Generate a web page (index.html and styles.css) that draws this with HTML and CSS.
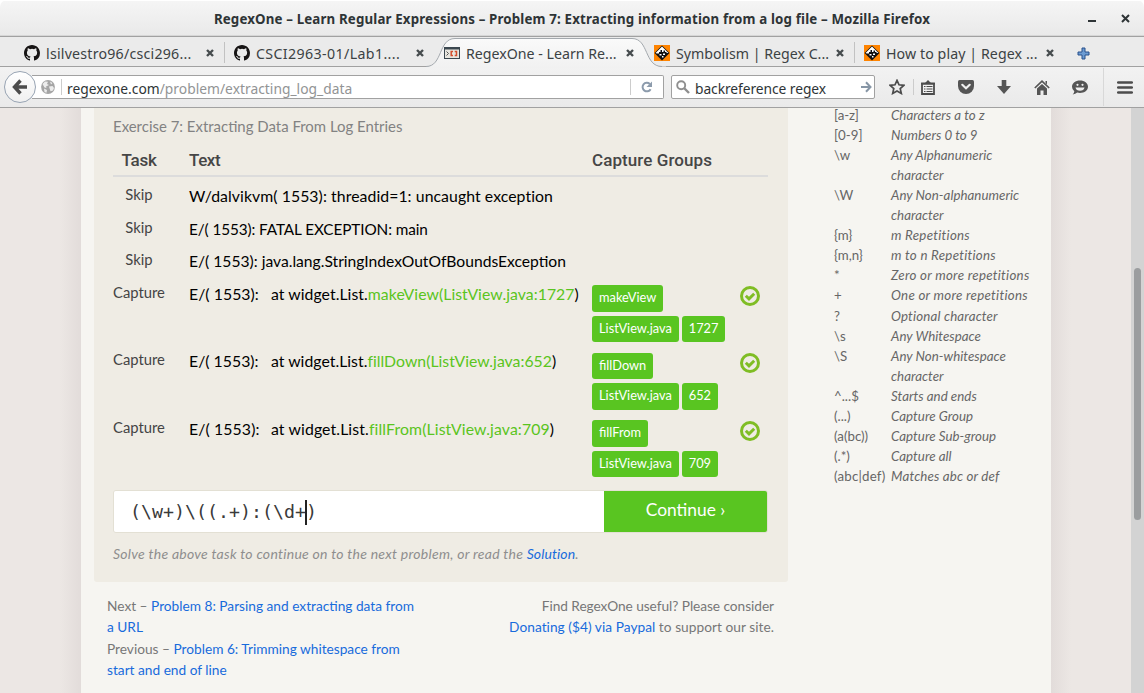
FILE: index.html
```
<!DOCTYPE html>
<html lang="en">
<head>
<meta charset="utf-8">
<title>RegexOne – Learn Regular Expressions – Problem 7</title>
<link rel="stylesheet" href="styles.css">
</head>
<body>
<svg class="defs" width="0" height="0">
  <symbol id="github" viewBox="0 0 16 16"><path fill="#171515" d="M8 0C3.58 0 0 3.58 0 8c0 3.54 2.29 6.53 5.47 7.59.4.07.55-.17.55-.38v-1.49c-2.01.37-2.53-.49-2.69-.94-.09-.23-.48-.94-.82-1.13-.28-.15-.68-.52-.01-.53.63-.01 1.08.58 1.23.82.72 1.21 1.87.87 2.33.66.07-.52.28-.87.51-1.07-1.78-.2-3.64-.89-3.64-3.95 0-.87.31-1.59.82-2.15-.08-.2-.36-1.02.08-2.12 0 0 .67-.21 2.2.82a7.6 7.6 0 0 1 4 0c1.53-1.04 2.2-.82 2.2-.82.44 1.1.16 1.92.08 2.12.51.56.82 1.27.82 2.15 0 3.07-1.87 3.75-3.65 3.95.29.25.54.73.54 1.48v2.2c0 .21.15.46.55.38A8 8 0 0 0 16 8c0-4.42-3.58-8-8-8z"/></symbol>
  <symbol id="golf" viewBox="0 0 16 16"><path fill="#ff8400" d="M0 0h16v16H0z"/><path fill="#111" d="M8 .5L15.500 8 8 15.500.5 8z"/><path fill="#fff" d="M8 1.500L14.500 8H12.500V7H11V5.500H9.500V7H8V5H6.500V7H5v1.500H3L1.500 8zM5.500 9h2v1.500h-2zM9 8.500h2v1.500H9zM8 11h1.500v1.500H8z"/></symbol>
  <symbol id="close" viewBox="0 0 8 8"><path d="M1 1l6 6M7 1L1 7" stroke="#464c4e" stroke-width="2.4"/></symbol>
  <symbol id="check" viewBox="0 0 20 20"><circle cx="10" cy="10" r="8.5" fill="none" stroke="#7fbd24" stroke-width="3"/><path d="M5.8 9.7l3.2 3.2 5.2-5.2" fill="none" stroke="#7fbd24" stroke-width="2.9"/></symbol>
</svg>
<div class="window">
  <header class="titlebar">
    <span class="minimize"></span>
    <h1 class="window-title">RegexOne – Learn Regular Expressions – Problem 7: Extracting information from a log file – Mozilla Firefox</h1>
    <svg class="win-close" width="9" height="9" viewBox="0 0 9 9"><path d="M1 1l7 7M8 1L1 8" stroke="#2e3436" stroke-width="2"/></svg>
  </header>

  <nav class="tabs">
    <div class="tab first"><svg class="fav"><use href="#github"/></svg><span class="label t1">lsilvestro96/csci296...</span><svg class="x"><use href="#close"/></svg></div>
    <div class="tab"><svg class="fav"><use href="#github"/></svg><span class="label t2">CSCI2963-01/Lab1....</span><svg class="x"><use href="#close"/></svg></div>
    <div class="tab active">
      <svg class="tab-shape" width="240" height="31" viewBox="0 0 240 31"><defs><linearGradient id="tg" x2="0" y2="1"><stop stop-color="#fafafa"/><stop offset="1" stop-color="#f1f1f1"/></linearGradient></defs><path d="M0 31V29.5C17 29.5 12 1.5 29 1.5H206C223 1.5 218 29.5 236 29.5H240V31z" fill="url(#tg)"/><path d="M0 29.5C17 29.5 12 1.5 29 1.5H206C223 1.5 218 29.5 236 29.5" fill="none" stroke="#a4a9ae"/></svg>
      <svg class="fav" viewBox="0 0 16 16"><rect x=".5" y="2.5" width="15" height="11" fill="#e9e7e0" stroke="#3c4850"/><path d="M0 2h16v2.500H0z" fill="#3c4850"/><path d="M2.500 6.500L4.500 8.500l-2 2" fill="none" stroke="#555"/><path d="M9 6.500H7.200v4H9M10.700 6.500h1.800v4h-1.800" fill="none" stroke="#d5502e" stroke-width="1.500"/></svg>
      <span class="label t3">RegexOne - Learn Re...</span><svg class="x"><use href="#close"/></svg></div>
    <div class="tab after"><svg class="fav"><use href="#golf"/></svg><span class="label t4">Symbolism | Regex C...</span><svg class="x"><use href="#close"/></svg></div>
    <div class="tab"><svg class="fav"><use href="#golf"/></svg><span class="label t5">How to play | Regex ...</span><svg class="x"><use href="#close"/></svg></div>
    <svg class="new-tab" width="13" height="13" viewBox="0 0 13 13"><path d="M5 1h3v4h4v3H8v4H5V8H1V5h4z" fill="#6c9bd2" stroke="#28508c"/></svg>
  </nav>

  <div class="toolbar">
    <div class="back"><svg width="16" height="16" viewBox="0 0 16 16"><path d="M8.500 1.500L2.500 8l6 6.500M3 8h12" fill="none" stroke="#4c4c4c" stroke-width="3.400"/></svg></div>
    <div class="urlbar">
      <svg class="globe" width="14" height="14" viewBox="0 0 14 14"><circle cx="7" cy="7" r="6.900" fill="#a5a5a5"/><path d="M1.500 4L4 1.500l3 .2-1 2.200 2 1-3 1.600.5 1.500-2-.5zM8 6.500l3.500-.5 1.500 2-1 2.500-2.500.8zM3 8.500l3 1.500-.5 2.800L3.500 12zM9 1.500l2.500 1.500-1.500 1.500z" fill="#ececec"/></svg>
      <span class="sep"></span>
      <span class="url">regexone.com<span class="path">/problem/extracting_log_data</span></span>
      <span class="sep reload-sep"></span>
      <svg class="reload" width="12" height="12" viewBox="0 0 12 12"><path d="M9.600 8.200A4.300 4.300 0 1 1 8.800 2.900" fill="none" stroke="#8c9bac" stroke-width="2"/><path d="M11 .5v5.500H5.500z" fill="#8c9bac"/></svg>
    </div>
    <div class="search">
      <svg width="14" height="14" viewBox="0 0 14 14"><circle cx="5.200" cy="5.200" r="4" fill="none" stroke="#8f8f8f" stroke-width="1.900"/><path d="M8 8l5 5" stroke="#8f8f8f" stroke-width="2.400"/></svg>
      <span class="query">backreference regex</span>
      <svg class="go" width="11" height="12" viewBox="0 0 11 12"><path d="M0 6h9M5 1.200L9.500 6 5 10.800" fill="none" stroke="#8796a6" stroke-width="2"/></svg>
    </div>
    <div class="actions">
      <svg width="16" height="16" viewBox="0 0 16 16"><path d="M8 1.400l2 4.400 4.900.5-3.700 3.200 1.100 4.900L8 11.900l-4.300 2.500 1.100-4.900L1.100 6.300 6 5.800z" fill="none" stroke="#4c4c4c" stroke-width="1.700"/></svg>
      <span class="sep star-sep"></span>
      <svg width="14" height="15" viewBox="0 0 14 15"><path d="M1 3.500h12V14H1z" fill="#f0f0f0" stroke="#4c4c4c" stroke-width="1.800"/><path d="M0 4.500V3h4l3-3 3 3h4v1.500z" fill="#4c4c4c"/><path d="M3 6.500h1.500M3 9h1.500M3 11.500h1.500M5.500 6.500h6M5.500 9h6M5.500 11.500h6" stroke="#4c4c4c"/></svg>
      <svg width="16" height="14" viewBox="0 0 16 14"><path d="M1.500 0h13Q16 0 16 1.500V6a8 8 0 0 1-16 0V1.500Q0 0 1.500 0z" fill="#555"/><path d="M4.300 4.800L8 8.200l3.700-3.400" fill="none" stroke="#f0f0f0" stroke-width="2.200" stroke-linecap="round"/></svg>
      <svg width="14" height="14" viewBox="0 0 14 14"><path d="M4.700 0h4.600v6H14l-7 8-7-8h4.700z" fill="#555"/></svg>
      <svg width="16" height="15" viewBox="0 0 16 15"><path d="M.8 8L8 1.200 15.200 8" fill="none" stroke="#555" stroke-width="1.700"/><path d="M3 8.500l5-4.500 5 4.500V15H9.500v-4.500h-3V15H3zM11.500 1H13v3.500L11.500 3z" fill="#555"/></svg>
      <svg width="16" height="15" viewBox="0 0 16 15"><path d="M8 .5c4.500 0 8 2.700 8 6.300S12.500 13 8 13c-1 0-2-.1-2.800-.4Q3.500 14.300.7 14.600 2.200 13 2.300 11.300.1 9.700 0 6.800C0 3.200 3.500.5 8 .5z" fill="#555"/><circle cx="5.500" cy="4.800" r="1.100" fill="#eee"/><circle cx="10.500" cy="4.800" r="1.100" fill="#eee"/><path d="M3.500 7.500h9q-.8 3.200-4.500 3.200T3.500 7.500z" fill="#eee"/></svg>
      <span class="menu-sep"></span>
      <svg width="16" height="13" viewBox="0 0 16 13"><path d="M1.200 1.500h13.600M1.200 6.500h13.600M1.200 11.500h13.600" stroke="#4c4c4c" stroke-width="2.600" stroke-linecap="round"/></svg>
    </div>
  </div>

  <div class="viewport">
    <div class="side left"></div>
    <main class="page">
      <div class="lesson">
        <section class="exercise">
          <h2 class="exercise-title">Exercise 7: Extracting Data From Log Entries</h2>
          <div class="row head"><span class="c-task">Task</span><span class="c-text">Text</span><span class="cg">Capture Groups</span></div>
          <div class="row"><span class="task">Skip</span><span class="log l1">W/dalvikvm( 1553): threadid=1: uncaught exception</span></div>
          <div class="row"><span class="task">Skip</span><span class="log l2">E/( 1553): FATAL EXCEPTION: main</span></div>
          <div class="row"><span class="task">Skip</span><span class="log l3">E/( 1553): java.lang.StringIndexOutOfBoundsException</span></div>
          <div class="row tall"><span class="task">Capture</span><span class="log"><span class="lead">E/( 1553):</span>at widget.List.<em>makeView(ListView.java:1727</em>)</span><div class="groups"><b>makeView</b><b>ListView.java</b><b>1727</b></div><svg class="ok"><use href="#check"/></svg></div>
          <div class="row tall"><span class="task">Capture</span><span class="log l5"><span class="lead">E/( 1553):</span>at widget.List.<em>fillDown(ListView.java:652</em>)</span><div class="groups"><b>fillDown</b><b>ListView.java</b><b>652</b></div><svg class="ok"><use href="#check"/></svg></div>
          <div class="row tall"><span class="task">Capture</span><span class="log l6"><span class="lead">E/( 1553):</span>at widget.List.<em>fillFrom(ListView.java:709</em>)</span><div class="groups"><b>fillFrom</b><b>ListView.java</b><b>709</b></div><svg class="ok"><use href="#check"/></svg></div>
          <div class="answer"><div class="field">(\w+)\((.+):(\d+<span class="caret"></span>)</div><div class="continue">Continue ›</div></div>
          <p class="hint">Solve the above task to continue on to the next problem, or read the <a>Solution</a>.</p>
        </section>
        <footer class="links">
          <p>Next – <a>Problem 8: Parsing and extracting data from<br>a URL</a><br>Previous – <a>Problem 6: Trimming whitespace from<br>start and end of line</a></p>
          <p class="donate"><span class="useful">Find RegexOne useful? Please consider</span><br><a>Donating ($4) via Paypal</a> to support our site.</p>
        </footer>
      </div>
      <dl class="cheats">
        <dt>[a-z]</dt><dd>Characters a to z</dd>
        <dt>[0-9]</dt><dd>Numbers 0 to 9</dd>
        <dt>\w</dt><dd>Any Alphanumeric<br>character</dd>
        <dt>\W</dt><dd>Any Non-alphanumeric<br>character</dd>
        <dt>{m}</dt><dd class="rep">m Repetitions</dd>
        <dt>{m,n}</dt><dd class="rep">m to n Repetitions</dd>
        <dt>*</dt><dd class="rep">Zero or more repetitions</dd>
        <dt>+</dt><dd class="rep">One or more repetitions</dd>
        <dt>?</dt><dd class="opt">Optional character</dd>
        <dt>\s</dt><dd>Any Whitespace</dd>
        <dt>\S</dt><dd>Any Non-whitespace<br>character</dd>
        <dt>^...$</dt><dd>Starts and ends</dd>
        <dt>(...)</dt><dd>Capture Group</dd>
        <dt>(a(bc))</dt><dd>Capture Sub-group</dd>
        <dt>(.*)</dt><dd>Capture all</dd>
        <dt class="alt">(abc|def)</dt><dd class="opt">Matches abc or def</dd>
      </dl>
    </main>
    <div class="side right"></div>
    <div class="scrollbar"><div class="thumb"></div></div>
  </div>
</div>
</body>
</html>
```
FILE: styles.css
```
* { box-sizing: border-box; }
body { margin: 0; background: #fff; font-family: Lato, "Liberation Sans", sans-serif; }
h1, h2, p, dl, dd { margin: 0; font-weight: normal; }
svg { display: block; flex: none; }
.defs { position: absolute; }
.window { width: 1144px; height: 693px; overflow: hidden; display: flex; flex-direction: column; border-radius: 7px 7px 0 0; white-space: nowrap; }

/* Browser chrome */
.titlebar { height: 37px; flex: none; display: grid; grid-template-columns: 1fr 33px 24px; align-items: center; background: linear-gradient(#f5f5f5, #e9e9e9); border-top: 1px solid #fff; border-bottom: 1px solid #a1a1a1; box-shadow: inset 0 -1px #d6d6d6; font-family: "Noto Sans", sans-serif; }
.window-title { grid-column: 1; grid-row: 1; padding-left: 57px; text-align: center; font-size: 13.3px; letter-spacing: .155px; font-weight: bold; line-height: 20px; color: #2e3436; }
.minimize { grid-column: 2; width: 8px; height: 2px; margin: 5px 0 0 1px; background: #2e3436; }
.win-close { grid-column: 3; margin-left: 1px; }
.tabs { height: 30px; flex: none; display: flex; background: #ebebeb; border-bottom: 1px solid #a1a1a1; font: 14.2px/20px "Noto Sans", sans-serif; color: #3c4244; }
.tab { position: relative; width: 210px; height: 29px; display: flex; align-items: center; padding: 2px 0 0 9px; }
.tab.first { width: 225px; padding-left: 24px; }
.tab + .tab::before { content: ""; position: absolute; left: -1px; top: 5px; width: 1px; height: 21px; background: #c2c2c2; }
.tab.active::before, .tab.after::before { display: none; }
.tab-shape { position: absolute; left: -9px; top: 0; z-index: 0; }
.fav { width: 16px; height: 16px; position: relative; z-index: 1; }
.label { width: 166px; flex: none; padding-left: 6px; padding-top: 3px; position: relative; z-index: 1; }
.t1 { letter-spacing: .22px; }
.t2 { letter-spacing: .38px; }
.t5 { letter-spacing: .08px; }
.x { width: 8px; height: 8px; position: relative; z-index: 1; }
.new-tab { margin: 10px 0 0 12px; }
.toolbar { height: 41px; flex: none; display: flex; align-items: center; background: linear-gradient(#f2f2f2, #eaeaea); border-bottom: 1px solid #a1a1a1; font: 13.8px/20px "Noto Sans", sans-serif; color: #2e3436; }
.back { width: 32px; height: 32px; margin-left: 4px; border: 1px solid #98a4b3; border-radius: 50%; display: grid; place-items: center; background: linear-gradient(#fff, #f0f0f0); position: relative; z-index: 1; }
.urlbar { width: 632px; height: 24px; margin-left: -4px; display: flex; align-items: center; background: #fff; border: 1px solid #a1a1a1; border-left: 0; border-radius: 0 2px 2px 0; }
.globe { margin-left: 9px; }
.sep { width: 1px; height: 16px; background: #ccc; margin-left: 6px; }
.url { width: 563px; margin-left: 5px; padding-top: 3px; letter-spacing: .02px; }
.path { color: #929495; }
.reload-sep { margin-left: 0; }
.reload { margin-left: 10px; }
.search { width: 204px; height: 24px; margin-left: 7px; padding: 0 3px 0 4px; display: flex; align-items: center; background: #fff; border: 1px solid #a1a1a1; border-radius: 2px; }
.query { width: 171px; flex: none; padding: 3px 0 0 5px; letter-spacing: -.06px; }
.actions { display: grid; grid-template-columns: 24px 8px 37px 39px 37px 38px 31px 14px 16px; align-items: center; margin-left: 14px; }
.star-sep { margin: 0; }
.menu-sep { width: 1px; height: 38px; background: #d8d8d8; }

/* Page */
.viewport { flex: 1; min-height: 0; display: flex; overflow: hidden; }
.side { background: #ece7e4; }
.left { width: 81px; background: linear-gradient(90deg, #ece7e4 60px, #e2dcda); }
.right { width: 80px; background: linear-gradient(270deg, #ece7e4 60px, #e2dcda); }
.page { width: 970px; display: flex; background: #f6f5f1; }
.lesson { width: 707px; padding-left: 13px; }
.exercise { width: 694px; height: 474px; padding: 8px 20px 0 19px; background: #efece4; border-radius: 0 0 3px 3px; }
.exercise-title { height: 29px; font-size: 14.95px; line-height: 20px; color: #828282; }
.row { display: grid; grid-template-columns: 52px 427px 148px 20px; height: 32.6px; align-items: start; }
.row > :nth-child(2) { margin-left: 24px; }
.row.head { height: 32px; margin-bottom: 3px; padding-top: 5px; border-bottom: 2px solid #dcdcdc; font: 500 17px/20px Roboto, "Noto Sans", sans-serif; color: #464646; }
.row .c-task { text-align: center; letter-spacing: -.2px; }
.row .c-text { letter-spacing: -.4px; }
.row .cg { letter-spacing: .08px; }
.task { padding-top: 4px; text-align: center; font-size: 14.8px; line-height: 20px; color: #444; }
.log { padding-top: 6px; font-size: 15.8px; line-height: 20px; color: #000; letter-spacing: .05px; }
.l1 { letter-spacing: .07px; }
.l2 { font-size: 15.3px; letter-spacing: -.09px; }
.l3 { font-size: 15.65px; letter-spacing: 0; }
.l5 { letter-spacing: .02px; }
.l6 { letter-spacing: .12px; }
.log em { font-style: normal; color: #5ac420; }
.lead { display: inline-block; width: 82px; }
.row.tall { height: 67.500px; }
.groups { display: flex; flex-wrap: wrap; gap: 4px 3px; width: 148px; padding-top: 7.300px; }
.groups b { height: 26.500px; padding: 0 7px; border-radius: 3px; background: #59c521; color: #fff; font-weight: normal; font-size: 12.800px; line-height: 25px; }
.groups b:first-child { margin-right: 50px; }
.ok { width: 20px; height: 20px; margin-top: 8px; }
.answer { height: 43px; margin: 9.700px 0 0 0; display: flex; border: 1px solid #e3e0d4; border-radius: 3px; overflow: hidden; }
.field { width: 490px; height: 41px; padding-left: 16px; background: #fff; font: 18.27px/41px "DejaVu Sans Mono", monospace; color: #3a3a3a; }
.caret { display: inline-block; width: 2px; height: 25px; margin: 0 -1px; vertical-align: -7px; background: #222; }
.continue { flex: 1; background: #59c521; color: #fff; font-size: 17.400px; line-height: 38px; text-align: center; }
.hint { margin-top: 10px; font-size: 14px; letter-spacing: .265px; font-style: italic; line-height: 21px; color: #8e8e8e; }
.hint a { letter-spacing: .1px; }
.links { padding: 13px 0 0 13px; display: flex; font-size: 13.700px; line-height: 21.400px; color: #777; }
.links p { width: 334px; }
.links .donate { width: 333px; text-align: right; letter-spacing: .04px; }
.links .useful { letter-spacing: -.05px; }
a { color: #186bdc; }
.cheats { display: grid; grid-template-columns: 57px 160px; align-content: start; margin: -3.500px 0 0 46px; font-size: 13.300px; line-height: 20.110px; color: #666; }
.cheats dd { font-style: italic; letter-spacing: .03px; }
.cheats .rep { letter-spacing: .27px; }
.cheats .opt { letter-spacing: .17px; }
.cheats .alt { letter-spacing: .2px; }
.scrollbar { width: 13px; padding: 160px 3px 0; background: #d3d3d3; }
.thumb { width: 7px; height: 252px; border-radius: 4px; background: #9b9d9f; }
```
